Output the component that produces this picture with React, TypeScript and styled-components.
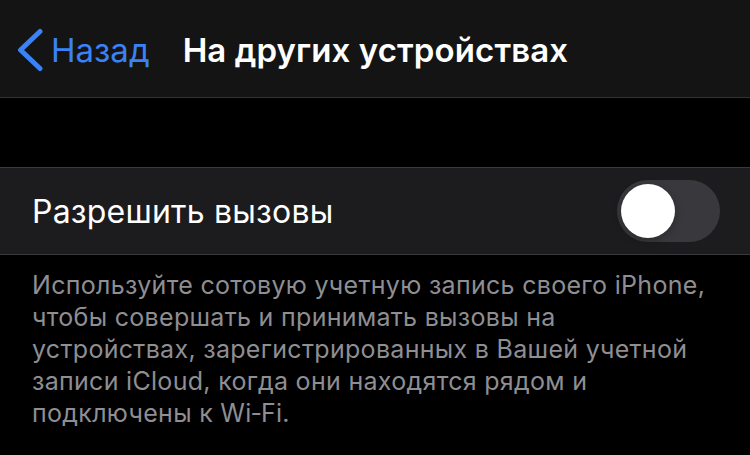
import { ReactElement, useState } from 'react'
import styled, { createGlobalStyle } from 'styled-components'

const GlobalStyle = createGlobalStyle`
  html, body {
    margin: 0;
    padding: 0;
    background: #000;
  }
  body {
    font-family: Inter, "Noto Sans", "Liberation Sans", sans-serif;
    -webkit-font-smoothing: antialiased;
  }
`

const Screen = styled.div`
  width: 750px;
  height: 455px;
  background: #000;
  overflow: hidden;
`

const NavBar = styled.div`
  box-sizing: border-box;
  height: 98px;
  background: #141414;
  border-bottom: 1px solid #333336;
  display: flex;
  align-items: center;
  padding: 3px 0 0 17px;
`

const BackButton = styled.button`
  display: flex;
  align-items: center;
  gap: 8px;
  background: none;
  border: none;
  padding: 0;
  color: #3a82f7;
  font: inherit;
  font-size: 33px;
  cursor: pointer;
`

const Title = styled.h1`
  margin: 0 0 0 33px;
  color: #fff;
  font-size: 33px;
  font-weight: 600;
  letter-spacing: 0.1px;
`

const Spacer = styled.div`
  height: 69px;
`

const Row = styled.div`
  height: 86px;
  background: #1c1c1e;
  border-top: 1px solid #3a3a3c;
  border-bottom: 1px solid #3a3a3c;
  display: flex;
  align-items: center;
  justify-content: space-between;
  padding: 0 30px 0 32px;
`

const RowLabel = styled.span`
  color: #fff;
  font-size: 32px;
  letter-spacing: 0.2px;
`

const Switch = styled.button<{ on: boolean }>`
  width: 103px;
  height: 62px;
  border-radius: 31px;
  border: none;
  padding: 4px;
  background: ${({ on }) => (on ? '#32d74b' : '#39393d')};
  display: flex;
  justify-content: ${({ on }) => (on ? 'flex-end' : 'flex-start')};
  cursor: pointer;
`

const Knob = styled.span`
  width: 54px;
  height: 54px;
  border-radius: 50%;
  background: #fff;
  box-shadow: 0 3px 8px rgba(0, 0, 0, 0.25);
`

const Footer = styled.p`
  margin: 0;
  padding: 14px 40px 0 32px;
  color: #8e8e93;
  font-size: 25px;
  line-height: 32px;
  letter-spacing: 0.3px;
`

function Chevron (): ReactElement {
  return (
    <svg width="26" height="44" viewBox="0 0 26 44" fill="none">
      <path d="M23 3.5 L3.5 22 L23 40.5" stroke="#3a82f7" strokeWidth="5" strokeLinecap="round" strokeLinejoin="round" />
    </svg>
  )
}

export default function App (): ReactElement {
  const [allowCalls, setAllowCalls] = useState(false)

  return (
    <Screen>
      <GlobalStyle />
      <NavBar>
        <BackButton>
          <Chevron />
          Назад
        </BackButton>
        <Title>На других устройствах</Title>
      </NavBar>
      <Spacer />
      <Row>
        <RowLabel>Разрешить вызовы</RowLabel>
        <Switch on={allowCalls} onClick={() => setAllowCalls(!allowCalls)}>
          <Knob />
        </Switch>
      </Row>
      <Footer>
        Используйте сотовую учетную запись своего iPhone, чтобы совершать и принимать вызовы на
        устройствах, зарегистрированных в Вашей учетной записи iCloud, когда они находятся рядом и
        подключены к Wi‑Fi.
      </Footer>
    </Screen>
  )
}
